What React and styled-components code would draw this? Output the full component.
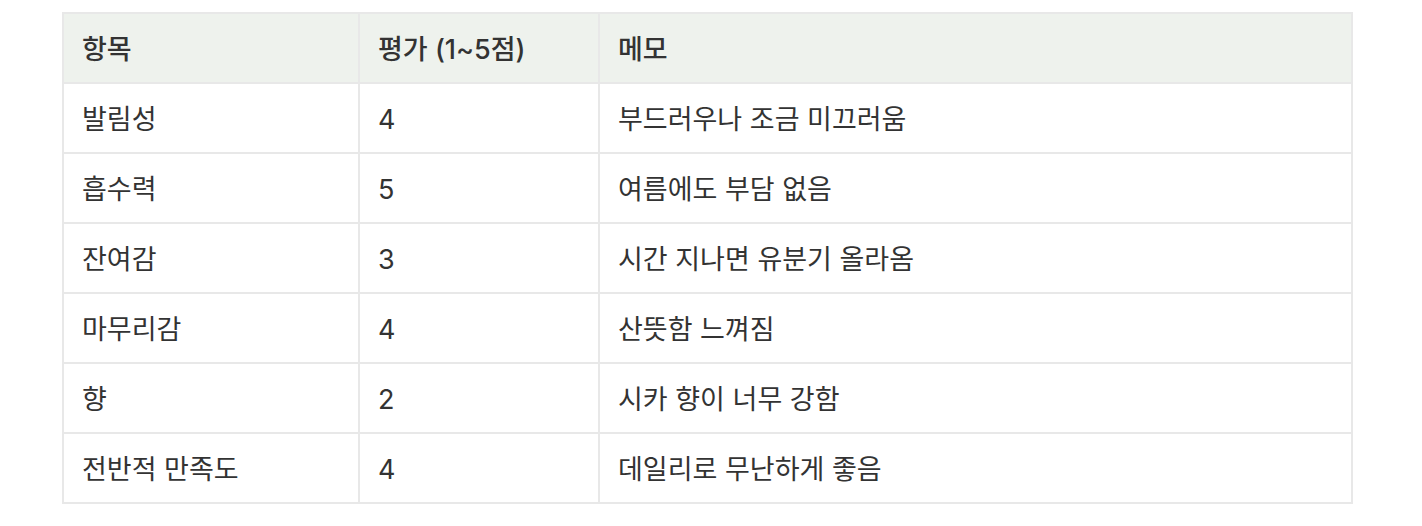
import React from 'react';
import styled, { createGlobalStyle } from 'styled-components';

const GlobalStyle = createGlobalStyle`
  body {
    margin: 0;
    background: #ffffff;
    font-family: Inter, "Noto Sans CJK KR", sans-serif;
    color: #333333;
  }
`;

const Page = styled.div`
  padding: 12px 69px 0 62px;
`;

const Table = styled.table`
  width: 100%;
  border-collapse: collapse;
  table-layout: fixed;
  border: 2px solid #e8e8e8;
`;

const HeadCell = styled.th`
  width: ${(p) => p.$width || 'auto'};
  height: 65px;
  padding: 3px 18px 0;
  line-height: 1.3;
  text-align: left;
  font-size: 27px;
  font-weight: 500;
  background: #eef2ed;
  border: 2px solid #e8e8e8;
`;

const Cell = styled.td`
  height: 65px;
  padding: 3px 18px 0;
  line-height: 1.3;
  font-size: 27px;
  font-weight: 400;
  border: 2px solid #e8e8e8;
`;

const rows = [
  ['발림성', '4', '부드러우나 조금 미끄러움'],
  ['흡수력', '5', '여름에도 부담 없음'],
  ['잔여감', '3', '시간 지나면 유분기 올라옴'],
  ['마무리감', '4', '산뜻함 느껴짐'],
  ['향', '2', '시카 향이 너무 강함'],
  ['전반적 만족도', '4', '데일리로 무난하게 좋음'],
];

const App = () => {
  return (
    <Page>
      <GlobalStyle />
      <Table>
        <thead>
          <tr>
            <HeadCell $width="258px">항목</HeadCell>
            <HeadCell $width="202px">평가 (1~5점)</HeadCell>
            <HeadCell>메모</HeadCell>
          </tr>
        </thead>
        <tbody>
          {rows.map((r) => (
            <tr key={r[0]}>
              <Cell>{r[0]}</Cell>
              <Cell>{r[1]}</Cell>
              <Cell>{r[2]}</Cell>
            </tr>
          ))}
        </tbody>
      </Table>
    </Page>
  );
};

export default App;
